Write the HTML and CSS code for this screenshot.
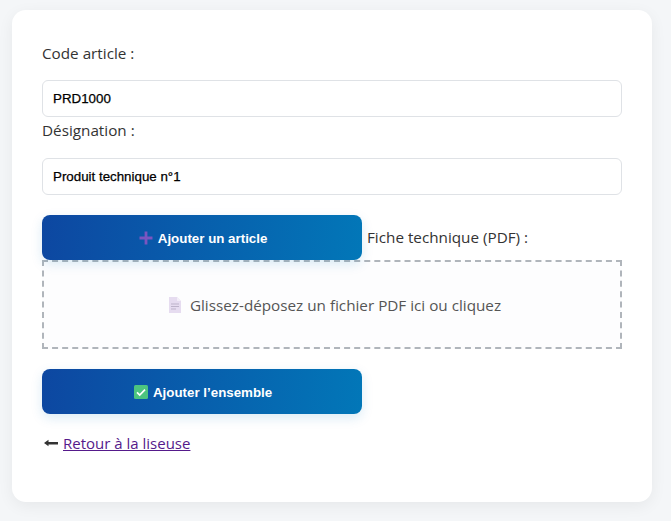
FILE: index.html
```html
<!DOCTYPE html>
<html lang="fr">
<head>
    <meta charset="UTF-8">
    <meta name="viewport" content="width=device-width, initial-scale=1.0">
    <title>Ajouter un ensemble</title>
    <link rel="stylesheet" href="styles.css">
</head>
<body>
    <div class="container">
        <form>
            <label class="field-label" for="code">Code article :</label>
            <input class="field-input" type="text" id="code" value="PRD1000">
            <label class="field-label field-label-next" for="designation">Désignation :</label>
            <input class="field-input" type="text" id="designation" value="Produit technique n°1">

            <div class="add-row">
                <button type="button" class="btn">
                    <svg class="icon" width="14" height="14" viewBox="0 0 14 14"><path d="M5.6 .5h2.8v5.1h5.1v2.8H8.4v5.1H5.6V8.4H.5V5.6h5.1z" fill="#7a55c0"/></svg>
                    Ajouter un article
                </button>
                <span class="inline-label">Fiche technique (PDF) :</span>
            </div>

            <div class="dropzone">
                <svg class="icon" width="14" height="16" viewBox="0 0 14 16"><path d="M1 0h8l4 4v12H1z" fill="#e6dcf0"/><path d="M9 0l4 4H9z" fill="#f3eef8"/><path d="M3 7h8M3 9.5h8M3 12h5" stroke="#bdb3ca" stroke-width="1" fill="none"/></svg>
                Glissez-déposez un fichier PDF ici ou cliquez
            </div>

            <button type="button" class="btn btn-submit">
                <svg class="icon" width="14" height="14" viewBox="0 0 14 14"><rect width="14" height="14" rx="1.5" fill="#4cc47f"/><path d="M3 7.4l2.7 2.6L11 4.6" stroke="#fff" stroke-width="1.7" fill="none"/></svg>
                Ajouter l’ensemble
            </button>
        </form>

        <p class="back">
            <svg class="back-arrow" width="14" height="8" viewBox="0 0 14 8"><path d="M0 4l4.5-3.2v2.2H14v2.4H4.5v1.8z" fill="#333"/></svg>
            <a href="#">Retour à la liseuse</a>
        </p>
    </div>
</body>
</html>
```

FILE: styles.css
```css
body {
    font-family: "Open Sans", sans-serif;
    background: #f4f6f8;
    color: #333;
    margin: 0;
    padding: 10px 19px 19px 12px;
}
.container {
    background: #fff;
    padding: 30px;
    border-radius: 14px;
    box-shadow: 0 4px 16px rgba(0, 0, 0, 0.06);
    height: 432px;
}
.field-label {
    display: block;
    font-size: 15.25px;
    line-height: 26px;
    margin-bottom: 14px;
}
.field-label-next {
    margin-bottom: 15px;
}
.field-input {
    display: block;
    box-sizing: border-box;
    width: 100%;
    height: 37px;
    padding: 0 10px;
    border: 1px solid #dfe2e6;
    border-radius: 6px;
    font-family: "Liberation Sans", sans-serif;
    font-size: 13.33px;
    -webkit-text-stroke: 0.25px #000;
    color: #000;
    background: #fff;
}
.add-row {
    display: flex;
    align-items: center;
    gap: 5px;
    margin-top: 20px;
}
.inline-label {
    font-size: 15.25px;
    margin-bottom: 1px;
}
.btn {
    position: relative;
    display: block;
    width: 320px;
    height: 45px;
    padding: 2px 0 0 2px;
    border: none;
    border-radius: 8px;
    background: linear-gradient(95deg, #0d47a1, #0277b8);
    box-shadow: 0 4px 12px rgba(2, 119, 189, 0.15);
    color: #fff;
    font-family: "Liberation Sans", sans-serif;
    font-size: 13.33px;
    font-weight: bold;
}
.icon {
    vertical-align: -2px;
}
.btn .icon {
    margin-right: 2px;
}
.dropzone {
    box-sizing: border-box;
    height: 89px;
    padding-left: 5px;
    border: 2px dashed #b0b5bb;
    background: #fdfdfe;
    display: flex;
    align-items: center;
    justify-content: center;
    gap: 8px;
    font-size: 15.25px;
    color: #555;
}
.btn-submit {
    margin-top: 20px;
}
.back {
    display: flex;
    align-items: center;
    gap: 5px;
    margin: 17px 0 0;
    padding-left: 2px;
    font-size: 15px;
    line-height: 24px;
}
.back a {
    color: #551a8b;
}
```
